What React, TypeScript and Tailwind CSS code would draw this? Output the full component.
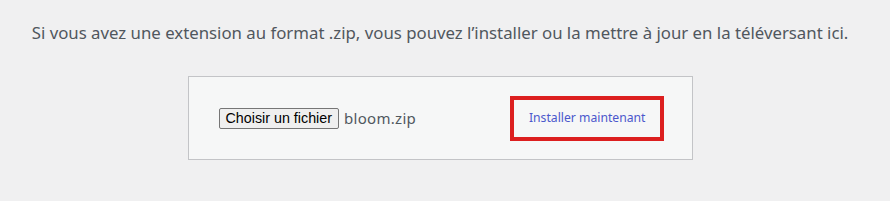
import React from "react";

export default function App() {
  return (
    <div className="w-[890px] h-[201px] bg-[#f0f0f1] text-[#50575e]" style={{ fontFamily: "'Noto Sans', sans-serif" }}>
      <div className="flex justify-center pr-[10px] pt-[21px]">
        <p className="text-[16.8px] leading-[24px] whitespace-nowrap">
          Si vous avez une extension au format .zip, vous pouvez l’installer ou la mettre à jour en la téléversant ici.
        </p>
      </div>
      <div className="flex justify-center pr-[10px] pt-[31px]">
        <form className="relative flex w-[505px] h-[84px] items-center justify-between border border-[#c3c4c7] bg-[#f6f7f7] px-[30px]">
          <div className="flex items-center gap-[5px]">
            <button
              type="button"
              className="h-[21px] rounded-[2px] border border-[#767676] bg-[#efefef] px-[6px] text-[14.3px] leading-[19px] text-black"
              style={{ fontFamily: "'Liberation Sans', Arial, sans-serif" }}
            >
              Choisir un fichier
            </button>
            <span className="text-[15px] tracking-[0.3px] text-[#50575e]">bloom.zip</span>
          </div>
          <div className="relative mr-[6px]">
            <span className="block px-[10px] text-[12.2px] leading-[30px] text-[#4b57cc]">Installer maintenant</span>
            <div className="absolute left-[-9px] right-[-8px] top-[-7px] bottom-[-8px] border-[4px] border-[#dc1f1f]" />
          </div>
        </form>
      </div>
    </div>
  );
}
